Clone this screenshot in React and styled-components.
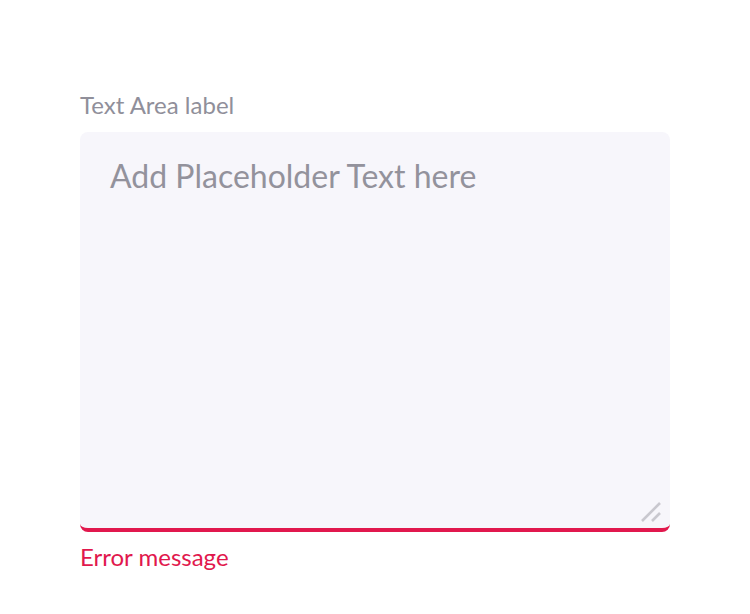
import React from 'react';
import styled, { createGlobalStyle } from 'styled-components';

const GlobalStyle = createGlobalStyle`
  html, body {
    margin: 0;
    padding: 0;
    background: #ffffff;
    font-family: Lato, "Open Sans", sans-serif;
  }
`;

const Page = styled.div`
  padding: 91px 80px 0;
`;

const Field = styled.div`
  display: flex;
  flex-direction: column;
  width: 590px;
`;

const Label = styled.label`
  font-size: 24px;
  line-height: 28px;
  color: #908f9a;
  margin-bottom: 13px;
`;

const AreaWrap = styled.div`
  position: relative;
  width: 590px;
  height: 400px;
`;

const TextArea = styled.textarea`
  display: block;
  box-sizing: border-box;
  width: 100%;
  height: 100%;
  padding: 24px 30px;
  border: none;
  border-bottom: 4px solid ${(p) => (p.$error ? '#e1184d' : 'transparent')};
  border-radius: 8px;
  background: #f7f6fb;
  font-family: Lato, sans-serif;
  font-size: 32px;
  line-height: 40px;
  color: #3a3942;
  resize: none;
  outline: none;

  &::placeholder {
    color: #93929c;
  }
`;

const Grip = styled.svg`
  position: absolute;
  right: 9px;
  bottom: 10px;
  width: 20px;
  height: 20px;
  pointer-events: none;
`;

const ErrorText = styled.span`
  margin-top: 10px;
  font-size: 24px;
  line-height: 30px;
  color: #e1184d;
`;

export default function App() {
  return (
    <>
      <GlobalStyle />
      <Page>
        <Field>
          <Label htmlFor="ta">Text Area label</Label>
          <AreaWrap>
            <TextArea id="ta" $error placeholder="Add Placeholder Text here" />
            <Grip viewBox="0 0 20 20">
              <path d="M1 19 L19 1 M11 19 L19 11" stroke="#c9c8cf" strokeWidth="2.6" />
            </Grip>
          </AreaWrap>
          <ErrorText>Error message</ErrorText>
        </Field>
      </Page>
    </>
  );
}
